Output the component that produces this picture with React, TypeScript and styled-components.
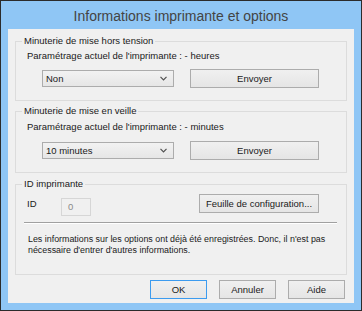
import React from "react";
import styled, { createGlobalStyle } from "styled-components";

const Global = createGlobalStyle`
  html, body { margin: 0; padding: 0; background: #ffffff; }
  * { box-sizing: border-box; }
`;

const Window = styled.div`
  width: 362px;
  height: 311px;
  border: 1px solid #2b2b2b;
  background: #8fc6f5;
  display: flex;
  flex-direction: column;
  font-family: "Liberation Sans", Arial, sans-serif;
  font-size: 9.5px;
  color: #1a1a1a;
`;

const TitleBar = styled.div`
  height: 28px;
  display: flex;
  align-items: center;
  justify-content: center;
  font-size: 14px;
  color: #444444;
  padding-top: 1px;
`;

const Client = styled.div`
  flex: 1;
  margin: 0 7px 7px 7px;
  background: #f0f0f0;
  padding: 12px 7px 0 7px;
  display: flex;
  flex-direction: column;
`;

const Group = styled.div<{ $h: number; $mt?: number }>`
  position: relative;
  border: 1px solid #dcdcdc;
  height: ${(p) => p.$h}px;
  margin-top: ${(p) => p.$mt ?? 0}px;
  display: flex;
  flex-direction: column;
`;

const Legend = styled.span`
  position: absolute;
  top: -7px;
  left: 6px;
  padding: 0 2px;
  background: #f0f0f0;
  line-height: 12px;
`;

const Line = styled.div`
  line-height: 12px;
  height: 12px;
  white-space: nowrap;
  padding-left: 11px;
`;

const SettingRow = styled.div`
  display: flex;
  align-items: center;
  padding-left: 26px;
  gap: 16px;
  height: 19px;
`;

const Combo = styled.div`
  width: 132px;
  height: 17px;
  border: 1px solid #acacac;
  background: linear-gradient(#f2f2f2, #e6e6e6);
  display: flex;
  align-items: center;
  justify-content: space-between;
  padding: 0 6px 0 3px;
`;

const Button = styled.div<{ $w: number; $h?: number; $default?: boolean }>`
  width: ${(p) => p.$w}px;
  height: ${(p) => p.$h ?? 19}px;
  border: 1px solid ${(p) => (p.$default ? "#3c9bef" : "#acacac")};
  background: linear-gradient(#f0f0f0, #e5e5e5);
  display: flex;
  align-items: center;
  justify-content: center;
  white-space: nowrap;
`;

const IdRow = styled.div`
  display: flex;
  align-items: flex-start;
  margin-top: 9px;
  height: 22px;
`;

const IdLabel = styled.span`
  margin: 4px 0 0 11px;
  width: 34px;
  line-height: 12px;
`;

const IdInput = styled.div`
  margin-top: 4px;
  width: 30px;
  height: 18px;
  border: 1px solid #d6d6d6;
  background: #f0f0f0;
  color: #8a8a8a;
  padding-left: 6px;
  line-height: 16px;
`;

const IdButtonSlot = styled.div`
  margin-left: 108px;
`;

const Separator = styled.div`
  margin: 6px 9px 0 8px;
  border-top: 1px solid #a0a0a0;
  border-bottom: 1px solid #ffffff;
`;

const Info = styled.p`
  margin: 10px 0 0 12px;
  line-height: 10.5px;
  font-size: 8.9px;
  white-space: nowrap;
`;

const Footer = styled.div`
  display: flex;
  justify-content: flex-end;
  gap: 12px;
  margin-top: 5px;
  padding-right: 2px;
`;

const Chevron = () => (
  <svg width="7" height="5" viewBox="0 0 7 5">
    <path d="M0.5 0.8 L3.5 3.8 L6.5 0.8" fill="none" stroke="#505050" strokeWidth="1.2" />
  </svg>
);

export default function App() {
  return (
    <>
      <Global />
      <Window>
        <TitleBar>Informations imprimante et options</TitleBar>
        <Client>
          <Group $h={60}>
            <Legend>Minuterie de mise hors tension</Legend>
            <Line style={{ marginTop: 8 }}>Paramétrage actuel de l'imprimante : - heures</Line>
            <SettingRow style={{ marginTop: 7 }}>
              <Combo>
                <span>Non</span>
                <Chevron />
              </Combo>
              <Button $w={129}>Envoyer</Button>
            </SettingRow>
          </Group>
          <Group $h={62} $mt={10}>
            <Legend>Minuterie de mise en veille</Legend>
            <Line style={{ marginTop: 9 }}>Paramétrage actuel de l'imprimante : - minutes</Line>
            <SettingRow style={{ marginTop: 8 }}>
              <Combo>
                <span>10 minutes</span>
                <Chevron />
              </Combo>
              <Button $w={129}>Envoyer</Button>
            </SettingRow>
          </Group>
          <Group $h={91} $mt={11}>
            <Legend>ID imprimante</Legend>
            <IdRow>
              <IdLabel>ID</IdLabel>
              <IdInput>0</IdInput>
              <IdButtonSlot>
                <Button $w={120}>Feuille de configuration...</Button>
              </IdButtonSlot>
            </IdRow>
            <Separator />
            <Info>
              Les informations sur les options ont déjà été enregistrées. Donc, il n'est pas
              <br />
              nécessaire d'entrer d'autres informations.
            </Info>
          </Group>
          <Footer>
            <Button $w={57} $default>OK</Button>
            <Button $w={57}>Annuler</Button>
            <Button $w={57}>Aide</Button>
          </Footer>
        </Client>
      </Window>
    </>
  );
}
